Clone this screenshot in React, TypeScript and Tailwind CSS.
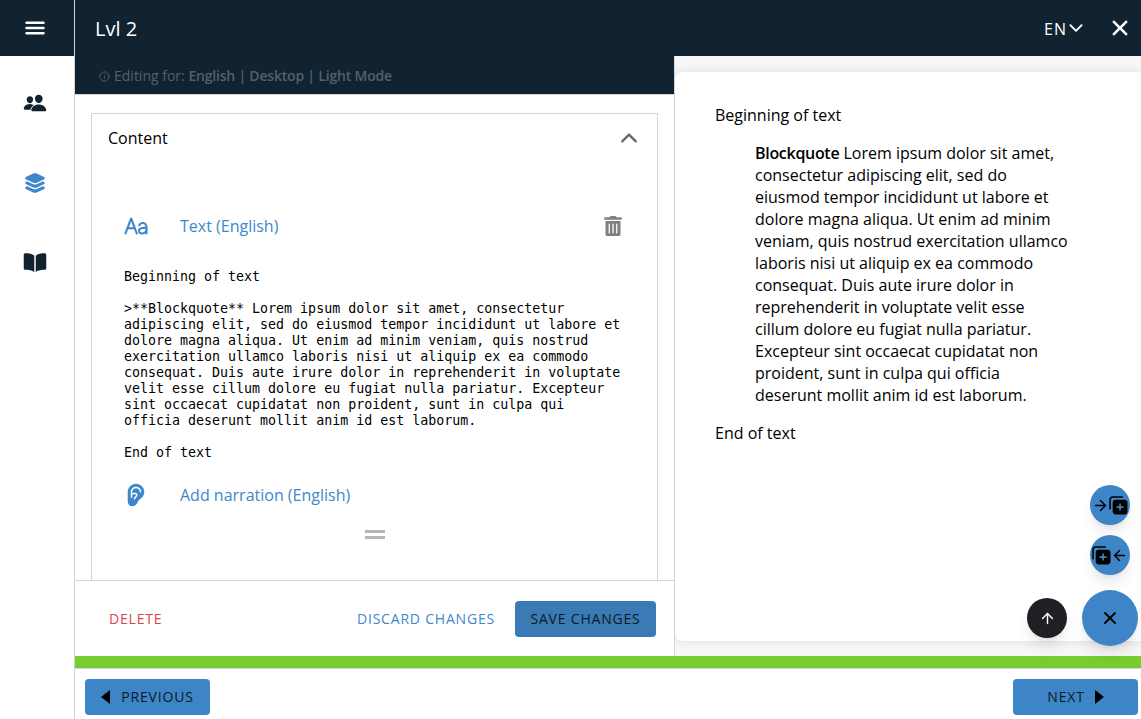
import { FaTrashAlt } from "react-icons/fa";
import { IoBook, IoChevronDown, IoChevronUp, IoClose, IoEar, IoLayers, IoMenu, IoPeople, IoText } from "react-icons/io5";
import { ArrowLeft, ArrowRight, ArrowUp, Info, X } from "lucide-react";

const source = `Beginning of text

>**Blockquote** Lorem ipsum dolor sit amet, consectetur
adipiscing elit, sed do eiusmod tempor incididunt ut labore et
dolore magna aliqua. Ut enim ad minim veniam, quis nostrud
exercitation ullamco laboris nisi ut aliquip ex ea commodo
consequat. Duis aute irure dolor in reprehenderit in voluptate
velit esse cillum dolore eu fugiat nulla pariatur. Excepteur
sint occaecat cupidatat non proident, sunt in culpa qui
officia deserunt mollit anim id est laborum.

End of text`;

function CopyPlus() {
  return (
    <svg width="19" height="19" viewBox="0 0 18 18" fill="none">
      <path d="M1 12.5V3.5a2.5 2.5 0 0 1 2.5-2.5H13" stroke="#000" strokeWidth="1.5" />
      <rect x="3.5" y="3.5" width="14" height="14" rx="3" fill="#000" />
      <path d="M10.5 7.2v6.6M7.2 10.5h6.6" stroke="#3b85c7" strokeWidth="1.5" />
    </svg>
  );
}

function Sidebar() {
  return (
    <div className="flex w-[75px] shrink-0 flex-col border-r border-[#d4d4d4]">
      <div className="flex h-14 items-center justify-center bg-[#112330] pr-[5px]">
        <IoMenu size={26} color="#fff" />
      </div>
      <div className="flex flex-col items-center gap-[56px] pt-[35px] pr-[4px]">
        <IoPeople size={24} color="#112330" />
        <IoLayers size={24} color="#3d88cb" />
        <IoBook size={24} color="#112330" />
      </div>
    </div>
  );
}

function Editor() {
  return (
    <div className="flex w-[600px] shrink-0 flex-col border-r border-[#d4d4d4]">
      <div className="flex h-[39px] shrink-0 items-center gap-1 border-b border-[#d4d4d4] bg-[#112330] pl-6 pt-[2px] text-sm text-[#55606a]">
        <Info size={11} />
        <span>
          Editing for: <span className="font-semibold tracking-[-0.2px]">English | Desktop | Light Mode</span>
        </span>
      </div>
      <div className="min-h-0 flex-1 overflow-hidden px-4 pt-[18px]">
        <div className="h-[600px] border border-[#d4d4d4]">
          <div className="flex h-12 items-center justify-between pl-4 pr-[16px] text-black">
            <span>Content</span>
            <IoChevronUp size={24} color="#666" />
          </div>
          <div className="mt-[44px] flex h-10 items-center pl-[32px] pr-[34px] text-[#3d88cb]">
            <span className="w-[56px]">
              <IoText size={24} />
            </span>
            <span>Text (English)</span>
            <FaTrashAlt size={20} color="#808080" className="ml-auto" />
          </div>
          <pre className="mt-[23px] pl-8 font-['DejaVu_Sans_Mono',monospace] text-[13.3px] leading-4 text-black">{source}</pre>
          <div className="mt-[14px] flex h-10 items-center pl-[32px] text-[#3d88cb]">
            <span className="w-[56px]">
              <IoEar size={24} />
            </span>
            <span>Add narration (English)</span>
          </div>
          <div className="mt-[15px] flex flex-col items-center gap-[3px]">
            <div className="h-[3px] w-5 bg-[#b5b5b5]" />
            <div className="h-[3px] w-5 bg-[#b5b5b5]" />
          </div>
        </div>
      </div>
      <div className="flex h-[76px] shrink-0 items-center border-t border-[#d4d4d4] pl-[34px] pr-[18px] text-sm tracking-[0.8px]">
        <span className="text-[#d9434e]">DELETE</span>
        <span className="ml-auto text-[#3d88cb]">DISCARD CHANGES</span>
        <button className="ml-5 h-9 w-[141px] rounded bg-[#3a7ab5] text-[#0b1a26]">SAVE CHANGES</button>
      </div>
    </div>
  );
}

function Preview() {
  return (
    <div className="min-w-0 flex-1 overflow-hidden bg-[#f7f7f7] pt-4 pb-[15px]">
      <div className="h-full rounded-l-lg bg-white pl-10 pr-[70px] pt-[32px] leading-[22px] text-black shadow-[0_0_12px_rgba(0,0,0,0.1)]">
        <p>Beginning of text</p>
        <p className="ml-10 mt-4">
          <strong className="font-semibold tracking-[-0.3px]">Blockquote</strong> Lorem ipsum dolor sit amet, consectetur adipiscing elit, sed do eiusmod tempor
          incididunt ut labore et dolore magna aliqua. Ut enim ad minim veniam, quis nostrud exercitation ullamco laboris
          nisi ut aliquip ex ea commodo consequat. Duis aute irure dolor in reprehenderit in voluptate velit esse cillum
          dolore eu fugiat nulla pariatur. Excepteur sint occaecat cupidatat non proident, sunt in culpa qui officia
          deserunt mollit anim id est laborum.
        </p>
        <p className="mt-4">End of text</p>
      </div>
    </div>
  );
}

export default function App() {
  return (
    <div className="relative flex h-screen w-full overflow-hidden bg-white font-['Open_Sans',sans-serif] text-base">
      <Sidebar />
      <div className="flex min-w-0 flex-1 flex-col">
        <div className="flex h-14 shrink-0 items-center bg-[#112330] pl-5 pr-[11px] text-white">
          <span className="pt-[2px] text-xl">Lvl 2</span>
          <span className="ml-auto pt-[2px] tracking-[1px]">EN</span>
          <IoChevronDown size={20} className="-ml-[1px] mr-[20px]" />
          <IoClose size={28} className="-mr-[4px]" />
        </div>
        <div className="flex min-h-0 flex-1">
          <Editor />
          <Preview />
        </div>
        <div className="h-[13px] shrink-0 border-b border-[#d4d4d4] bg-[#76cd2f]" />
        <div className="flex h-[50px] shrink-0 items-start justify-between px-[10px] pt-[10px] text-sm tracking-[0.8px] text-[#0b1a26]">
          <button className="flex h-9 w-[125px] items-center justify-center gap-[11px] rounded bg-[#3d85c6]">
            <span className="h-0 w-0 border-y-[7px] border-r-[9px] border-y-transparent border-r-black" />
            PREVIOUS
          </button>
          <button className="-mr-[7px] flex h-9 w-[125px] items-center justify-center gap-[10px] rounded bg-[#3d85c6]">
            NEXT
            <span className="h-0 w-0 border-y-[7px] border-l-[9px] border-y-transparent border-l-black" />
          </button>
        </div>
      </div>

      <button className="absolute left-[1090px] top-[485px] flex h-10 w-10 items-center justify-center rounded-full bg-[#3d85c6] shadow-lg">
        <ArrowRight size={17} color="#000" />
        <CopyPlus />
      </button>
      <button className="absolute left-[1090px] top-[535px] flex h-10 w-10 items-center justify-center rounded-full bg-[#3d85c6] shadow-lg">
        <CopyPlus />
        <ArrowLeft size={17} color="#000" />
      </button>
      <button className="absolute left-[1027px] top-[598px] flex h-10 w-10 items-center justify-center rounded-full bg-[#1e2023] shadow-lg">
        <ArrowUp size={17} color="#fff" />
      </button>
      <button className="absolute left-[1082px] top-[590px] flex h-14 w-14 items-center justify-center rounded-full bg-[#3d85c6] shadow-lg">
        <X size={20} color="#000" strokeWidth={2.25} />
      </button>
    </div>
  );
}
